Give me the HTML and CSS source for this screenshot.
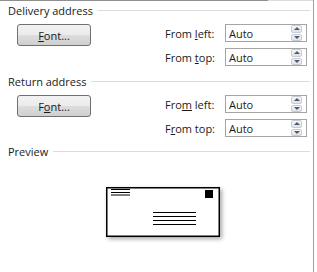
FILE: index.html
```html
<!DOCTYPE html>
<html lang="en">
<head>
  <meta charset="UTF-8">
  <title>Envelope Options</title>
  <link rel="stylesheet" href="styles.css">
</head>
<body>
<div class="dialog">
  <div class="topbar"></div>

  <div class="section-head">Delivery address</div>
  <div class="section-body">
    <button class="font-btn"><u>F</u>ont...</button>
    <div class="fields">
      <label>From <u>l</u>eft:</label>
      <div class="spin"><span>Auto</span><div class="arrows"><i class="up"></i><i class="down"></i></div></div>
      <label>From <u>t</u>op:</label>
      <div class="spin"><span>Auto</span><div class="arrows"><i class="up"></i><i class="down"></i></div></div>
    </div>
  </div>

  <div class="section-head second">Return address</div>
  <div class="section-body">
    <button class="font-btn">F<u>o</u>nt...</button>
    <div class="fields">
      <label>Fro<u>m</u> left:</label>
      <div class="spin"><span>Auto</span><div class="arrows"><i class="up"></i><i class="down"></i></div></div>
      <label>F<u>r</u>om top:</label>
      <div class="spin"><span>Auto</span><div class="arrows"><i class="up"></i><i class="down"></i></div></div>
    </div>
  </div>

  <div class="section-head third">Preview</div>
  <div class="preview">
    <svg class="envelope" width="114" height="50" viewBox="0 0 114 50">
      <rect x="0.75" y="0.75" width="112.5" height="48.5" fill="#fff" stroke="#000" stroke-width="1.5"/>
      <g stroke="#000" stroke-width="1">
        <line x1="5" y1="2.5" x2="24" y2="2.5"/>
        <line x1="5" y1="5.5" x2="24" y2="5.5"/>
        <line x1="5" y1="8" x2="24" y2="8"/>
        <line x1="47" y1="25.5" x2="90" y2="25.5"/>
        <line x1="47" y1="29.5" x2="90" y2="29.5"/>
        <line x1="47" y1="33.5" x2="90" y2="33.5"/>
        <line x1="47" y1="37.5" x2="90" y2="37.5"/>
      </g>
      <rect x="99" y="3" width="8" height="8" fill="#000"/>
    </svg>
  </div>
</div>
</body>
</html>
```

FILE: styles.css
```css
body {
  margin: 0;
  background: #fff;
  font-family: "Segoe UI", "Open Sans", sans-serif;
  font-size: 11px;
  color: #1a1a1a;
}
.dialog {
  width: 313px;
  height: 272px;
  border-right: 1px solid #a0a0a0;
}
.topbar {
  height: 1px;
  background: linear-gradient(to right, #8f8f8f 0, #8f8f8f 268px, #dcdcdc 268px);
}
.section-head {
  display: flex;
  align-items: center;
  gap: 5px;
  height: 15px;
  margin-top: 2px;
  padding: 0 3px 0 8px;
  white-space: nowrap;
}
.section-head::after {
  content: "";
  flex: 1;
  height: 1px;
  background: #dcdcdc;
}
.section-head.second {
  margin-top: 8px;
}
.section-head.third {
  margin-top: 7px;
}
.section-body {
  display: flex;
  align-items: flex-start;
  margin-top: 6px;
  padding-left: 17px;
}
.font-btn {
  width: 74px;
  height: 22px;
  padding: 0;
  border: 1px solid #707070;
  border-radius: 3px;
  background: linear-gradient(#f2f2f2 0%, #ebebeb 50%, #dddddd 51%, #cfcfcf 100%);
  font: inherit;
  color: inherit;
}
.fields {
  display: grid;
  grid-template-columns: 60px 82px;
  grid-auto-rows: 18px;
  row-gap: 6px;
  margin-left: 74px;
  align-items: center;
}
.spin {
  display: flex;
  align-items: center;
  height: 18px;
  box-sizing: border-box;
  border: 1px solid #a5a5a5;
  padding: 0 4px 0 3px;
}
.spin span {
  flex: 1;
}
.arrows {
  display: flex;
  flex-direction: column;
  width: 11px;
  height: 16px;
  gap: 1px;
}
.arrows i {
  flex: 1;
  display: flex;
  align-items: center;
  justify-content: center;
  border: 1px solid #c9ccd3;
  border-radius: 2px;
  background: linear-gradient(#f5f6f8, #dfe3ea);
}
.arrows i::before {
  content: "";
  border-left: 3px solid transparent;
  border-right: 3px solid transparent;
}
.arrows .up::before {
  border-bottom: 3px solid #4d5a73;
}
.arrows .down::before {
  border-top: 3px solid #4d5a73;
}
.preview {
  padding: 28px 0 0 106px;
}
.envelope {
  display: block;
  filter: drop-shadow(2px 2px 2px rgba(0, 0, 0, 0.35));
}
```
